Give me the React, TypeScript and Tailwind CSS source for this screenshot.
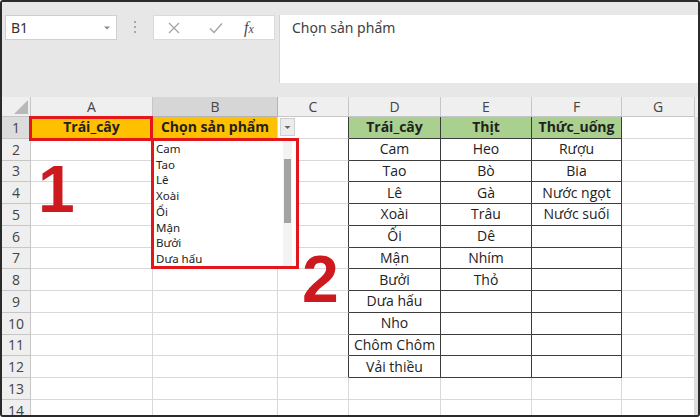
import React from "react";

const colWidths = ["w-[29px]", "w-[122px]", "w-[125px]", "w-[71px]", "w-[92px]", "w-[91px]", "w-[90px]", "w-[73px]"];
const letters = ["A", "B", "C", "D", "E", "F", "G"];

const D = ["Trái_cây", "Cam", "Tao", "Lê", "Xoài", "Ổi", "Mận", "Bưởi", "Dưa hấu", "Nho", "Chôm Chôm", "Vải thiều"];
const E = ["Thịt", "Heo", "Bò", "Gà", "Trâu", "Dê", "Nhím", "Thỏ", "", "", "", ""];
const F = ["Thức_uống", "Rượu", "Bia", "Nước ngọt", "Nước suối", "", "", "", "", "", "", ""];
const listItems = ["Cam", "Tao", "Lê", "Xoài", "Ổi", "Mận", "Bưởi", "Dưa hấu"];

function cellText(r: number, c: number): string {
  if (r === 1 && c === 0) return "Trái_cây";
  if (r === 1 && c === 1) return "Chọn sản phẩm";
  if (r <= 12) {
    if (c === 3) return D[r - 1];
    if (c === 4) return E[r - 1];
    if (c === 5) return F[r - 1];
  }
  return "";
}

function cellClass(r: number, c: number): string {
  const inTable = r <= 12 && c >= 3 && c <= 5;
  const leftOfTable = r <= 12 && c === 2;
  if (r === 1 && (c === 0 || c === 1)) return "bg-[#ffc000] border-r border-b border-[#d9d9d9] font-bold";
  if (r === 1 && inTable) return "bg-[#a9d08e] border-r border-b border-[#3c3c3c] font-bold";
  if (inTable) return "bg-white border-r border-b border-[#3c3c3c]";
  if (leftOfTable) return "bg-white border-r border-b border-r-[#3c3c3c] border-b-[#d9d9d9]";
  return "bg-white border-r border-b border-[#d9d9d9]";
}

export default function App() {
  const rows = Array.from({ length: 14 }, (_, i) => i + 1);
  return (
    <div className="relative w-[700px] h-[417px] overflow-hidden border-2 border-[#2a2a2a] rounded-[3px] bg-[#e7e7e7] font-['Open_Sans',sans-serif] text-[#222]">
      {/* formula bar area */}
      <div className="flex items-start h-[95px] bg-[#e7e7e7]">
        <div className="ml-[3px] mt-[13px] w-[112px] h-[25px] bg-white border border-[#cfcfcf] flex items-center justify-between px-[5px]">
          <span className="text-[14px] text-[#333] font-['Noto_Sans',sans-serif]">B1</span>
          <svg width="8" height="6" viewBox="0 0 8 6"><path d="M1 1.5 L4 4.5 L7 1.5 Z" fill="#8a8a8a" /></svg>
        </div>
        <div className="ml-[15px] mt-[19px] w-[6px] flex flex-col items-center gap-[3px]">
          <span className="w-[2px] h-[2px] bg-[#a8a8a8]" />
          <span className="w-[2px] h-[2px] bg-[#a8a8a8]" />
          <span className="w-[2px] h-[2px] bg-[#a8a8a8]" />
        </div>
        <div className="ml-[15px] mt-[13px] w-[122px] h-[25px] bg-white border border-[#dadada] flex items-center">
          <svg className="ml-[13px]" width="14" height="14" viewBox="0 0 14 14">
            <path d="M2 2 L12 12 M12 2 L2 12" stroke="#a5a5a5" strokeWidth="1.3" />
          </svg>
          <svg className="ml-[27px]" width="16" height="14" viewBox="0 0 16 14">
            <path d="M2 7.5 L6 11.5 L14 2.5" stroke="#a5a5a5" strokeWidth="1.4" fill="none" />
          </svg>
          <span className="ml-[20px] text-[16px] italic text-[#4a4a4a] font-['Liberation_Serif',serif]">f<span className="text-[12px]">x</span></span>
        </div>
        <div className="ml-[4px] mt-[13px] flex-1 h-[68px] bg-white border-l border-[#d4d4d4] pl-[12px] pt-0">
          <span className="text-[14px] text-[#404040] font-['Noto_Sans',sans-serif]">Chọn sản phẩm</span>
        </div>
      </div>

      {/* column headers */}
      <div className="flex h-[20px]">
        <div className={`${colWidths[0]} h-full bg-[#efefef] border-r border-b border-[#c6c6c6] relative`}>
          <svg className="absolute right-[2px] bottom-[2px]" width="14" height="14" viewBox="0 0 14 14">
            <path d="M14 0 L14 14 L0 14 Z" fill="#b9b9b9" />
          </svg>
        </div>
        {letters.map((l, i) => (
          <div
            key={l}
            className={`${colWidths[i + 1]} h-full flex items-center justify-center text-[14px] text-[#444] border-r border-b ${i === 1 ? "bg-[#d6d6d6] border-[#b4b4b4] text-[#222]" : "bg-[#efefef] border-[#c6c6c6]"}`}
          >
            {l}
          </div>
        ))}
        <div className="flex-1 h-full bg-[#efefef]" />
      </div>

      {/* rows */}
      {rows.map((r) => (
        <div key={r} className="flex h-[21.75px]">
          <div className={`${colWidths[0]} h-full flex items-center justify-center text-[14px] text-[#444] border-r border-b border-[#c6c6c6] ${r === 1 ? "bg-[#dcdcdc]" : "bg-[#efefef]"}`}>
            {r}
          </div>
          {letters.map((l, c) => (
            <div
              key={l}
              className={`${colWidths[c + 1]} h-full flex items-center justify-center text-[14px] leading-none whitespace-nowrap ${cellClass(r, c)}`}
            >
              {cellText(r, c)}
            </div>
          ))}
          <div className="flex-1 h-full bg-[#dedede]" />
        </div>
      ))}

      {/* red frame around A1 */}
      <div className="absolute left-[27px] top-[114px] w-[124px] h-[25px] border-[3px] border-[#e3161b]" />

      {/* dropdown button in C1 */}
      <div className="absolute left-[278px] top-[116px] w-[15px] h-[18px] bg-[#ececec] border border-[#cfcfcf] flex items-center justify-center">
        <svg width="7" height="5" viewBox="0 0 7 5"><path d="M0.5 1 L3.5 4 L6.5 1 Z" fill="#666" /></svg>
      </div>

      {/* dropdown list */}
      <div className="absolute left-[149px] top-[136px] w-[148px] h-[131px] border-[3px] border-[#e3161b] bg-white">
        <div className="relative w-full h-full">
          <div className="flex flex-col pl-[2px] pt-0">
            {listItems.map((it) => (
              <div key={it} className="h-[15.7px] flex items-center text-[11.5px] text-[#222] font-['Noto_Sans',sans-serif] leading-none">
                {it}
              </div>
            ))}
          </div>
          <div className="absolute right-[4px] top-0 w-[9px] h-full bg-[#f3f3f3]">
            <div className="absolute left-[1px] top-[18px] w-[7px] h-[64px] bg-[#a3a3a3]" />
          </div>
        </div>
      </div>

      {/* big annotation numbers */}
      <div className="absolute left-[36px] top-[154px] text-[66px] leading-none font-bold text-[#cc1a1f] font-['Liberation_Sans',sans-serif]">1</div>
      <div className="absolute left-[300px] top-[244px] text-[66px] leading-none font-bold text-[#cc1a1f] font-['Liberation_Sans',sans-serif]">2</div>
    </div>
  );
}
